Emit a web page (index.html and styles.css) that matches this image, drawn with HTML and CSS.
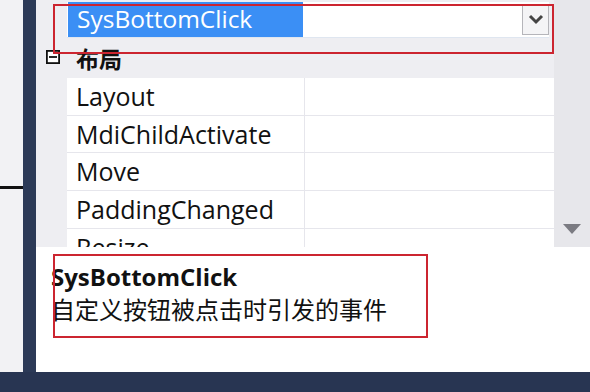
FILE: index.html
```html
<!DOCTYPE html>
<html>
<head>
<meta charset="utf-8">
<link rel="stylesheet" href="styles.css">
</head>
<body>
<div class="screen">
  <div class="main">
    <div class="leftpane"><div class="hline"></div></div>
    <div class="divider"></div>
    <div class="panel">
      <div class="gridarea">
        <div class="gridmain">
          <div class="combo">
            <div class="combo-text"><span class="sel">SysBottomClick</span></div>
            <div class="combo-btn">
              <svg width="16" height="12" viewBox="0 0 16 12"><path d="M2 2 L8 8 L14 2" fill="none" stroke="#444" stroke-width="3"/></svg>
            </div>
          </div>
          <div class="cat">
            <svg class="minus" width="14" height="14" viewBox="0 0 14 14"><rect x="0.9" y="0.9" width="12.2" height="12.2" fill="#fff" stroke="#111" stroke-width="1.8"/><line x1="3" y1="7" x2="11" y2="7" stroke="#111" stroke-width="1.8"/></svg>
            <span class="cat-label">布局</span>
          </div>
          <div class="rows">
            <div class="row"><div class="name">Layout</div><div class="val"></div></div>
            <div class="row"><div class="name">MdiChildActivate</div><div class="val"></div></div>
            <div class="row"><div class="name">Move</div><div class="val"></div></div>
            <div class="row"><div class="name">PaddingChanged</div><div class="val"></div></div>
            <div class="row"><div class="name">Resize</div><div class="val"></div></div>
          </div>
        </div>
        <div class="scrollbar">
          <svg width="18" height="10" viewBox="0 0 18 10"><path d="M0 0 L18 0 L9 10 Z" fill="#7b7b82"/></svg>
        </div>
      </div>
      <div class="desc">
        <div class="desc-title">SysBottomClick</div>
        <div class="desc-text">自定义按钮被点击时引发的事件</div>
      </div>
    </div>
  </div>
  <div class="taskbar"></div>
  <div class="mark mark-top"></div>
  <div class="mark mark-bottom"></div>
</div>
</body>
</html>
```
FILE: styles.css
```css
html, body {
  margin: 0;
  padding: 0;
}
body {
  width: 590px;
  height: 392px;
  overflow: hidden;
  font-family: "Open Sans", "Noto Sans CJK SC", sans-serif;
  color: #111;
}
.screen {
  position: relative;
  width: 590px;
  height: 392px;
  display: flex;
  flex-direction: column;
}
.main {
  height: 372px;
  display: flex;
  flex-shrink: 0;
}
.leftpane {
  width: 23px;
  background: #f2f2f4;
  padding-top: 186px;
  box-sizing: border-box;
}
.hline {
  height: 3px;
  background: #111;
}
.divider {
  width: 13px;
  background: #2c3a57;
}
.panel {
  flex: 1;
  display: flex;
  flex-direction: column;
  background: #fff;
}
.gridarea {
  height: 247px;
  flex-shrink: 0;
  display: flex;
  background: #eeeef2;
  overflow: hidden;
}
.gridmain {
  flex: 1;
  display: flex;
  flex-direction: column;
  padding-top: 2px;
  overflow: hidden;
}
.gridmain > * {
  flex-shrink: 0;
}
.combo {
  margin-left: 31px;
  margin-right: 5px;
  height: 35px;
  display: flex;
  background: #fff;
  border-bottom: 1px solid #dfe6f0;
}
.combo-text {
  flex: 1;
  padding-left: 1px;
}
.sel {
  display: inline-block;
  width: 235px;
  height: 35px;
  line-height: 34px;
  background: #3b8ff5;
  color: #fff;
  font-size: 24.5px;
  padding-left: 9px;
  box-sizing: border-box;
}
.combo-btn {
  width: 27px;
  height: 31px;
  margin-top: 2px;
  border: 1px solid #b5b5ba;
  background: #f4f4f6;
  display: flex;
  align-items: center;
  justify-content: center;
  box-sizing: border-box;
}
.cat {
  height: 30px;
  margin-top: 10px;
  display: flex;
  align-items: flex-start;
  padding-left: 10px;
}
.minus {
  margin-top: 2px;
}
.cat-label {
  margin-left: 16px;
  font-family: "Noto Sans CJK SC", sans-serif;
  font-size: 23px;
  font-weight: bold;
  line-height: 20px;
}
.rows {
  margin-left: 31px;
  background: #fff;
}
.row {
  height: 37.7px;
  display: flex;
  border-bottom: 1px solid #e6e6ec;
  box-sizing: border-box;
}
.name {
  width: 238px;
  border-right: 1px solid #e6e6ec;
  font-size: 25px;
  line-height: 36px;
  padding-left: 9px;
  box-sizing: border-box;
  white-space: nowrap;
}
.val {
  flex: 1;
}
.scrollbar {
  width: 36px;
  background: #e7e7eb;
  display: flex;
  align-items: flex-end;
  justify-content: center;
  padding-bottom: 13px;
  box-sizing: border-box;
}
.desc {
  flex: 1;
  padding-top: 14px;
  padding-left: 15px;
}
.desc-title {
  font-size: 24px;
  font-weight: bold;
  line-height: 32px;
}
.desc-text {
  font-family: "Noto Sans CJK SC", sans-serif;
  font-size: 24px;
  line-height: 32px;
}
.taskbar {
  height: 20px;
  background: #283552;
}
.mark {
  position: absolute;
  border: 2px solid #cc2530;
  box-sizing: border-box;
}
.mark-top {
  left: 53px;
  top: 4px;
  width: 501px;
  height: 50px;
}
.mark-bottom {
  left: 53px;
  top: 254px;
  width: 375px;
  height: 84px;
}
```
